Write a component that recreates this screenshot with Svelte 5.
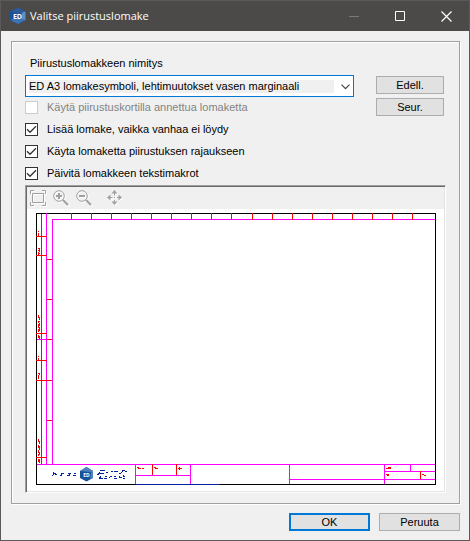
<script>
  const lomakkeet = ['ED A3 lomakesymboli, lehtimuutokset vasen marginaali'];

  let valittu = $state(lomakkeet[0]);
  let valinnat = $state([
    { id: 'kortti', teksti: 'Käytä piirustuskortilla annettua lomaketta', paalla: false, estetty: true },
    { id: 'lisaa', teksti: 'Lisää lomake, vaikka vanhaa ei löydy', paalla: true, estetty: false },
    { id: 'rajaus', teksti: 'Käyta lomaketta piirustuksen rajaukseen', paalla: true, estetty: false },
    { id: 'makrot', teksti: 'Päivitä lomakkeen tekstimakrot', paalla: true, estetty: false },
  ]);

  function siirry(askel) {
    const i = lomakkeet.indexOf(valittu) + askel;
    if (i >= 0 && i < lomakkeet.length) valittu = lomakkeet[i];
  }

  // edge marks of the sheet
  const ylamerkit = [35, 55, 75, 95, 115, 135, 155, 175, 195, 216, 236, 256, 276, 296, 316, 336, 356, 376];
  const ylaPolku = ylamerkit.map((x) => `M${x}.5 0V7`).join('');

  // [y, x1, x2]
  const vasenmerkit = [
    [23, 0, 11], [42, 0, 11], [46, 11, 16], [86, 11, 16], [120, 0, 11], [126, 11, 16],
    [147, 0, 11], [167, 0, 16], [207, 11, 16], [244, 0, 11],
  ];
  const vasenPolku = vasenmerkit.map(([y, a, b]) => `M${a} ${y}.5H${b}`).join('');
</script>

<main class="ikkuna">
  <header class="otsikko">
    <svg class="logo" width="18" height="18" viewBox="0 0 18 18" aria-hidden="true">
      <path d="M9 0.5L16.5 4.5V13L9 17L1 13V4.5Z" fill="#17509b" />
      <path d="M9 0.5L16.5 4.5L9 7L1 4.5Z" fill="#2c5a94" />
      <path d="M16.5 4.5V13L12 14L13 5.5Z" fill="#5c8fc6" />
      <path d="M1 13L9 10L16.5 13L9 17Z" fill="#3c74b5" />
      <text x="8.5" y="11.5" text-anchor="middle">ED</text>
    </svg>
    <h1>Valitse piirustuslomake</h1>
    <div class="ikkunanapit">
      <button aria-label="Pienennä" disabled>
        <svg width="11" height="11" viewBox="0 0 11 11"><path d="M0 5.5H10" stroke="#7b7a78" /></svg>
      </button>
      <button aria-label="Suurenna">
        <svg width="11" height="11" viewBox="0 0 11 11"><path d="M0.5 0.5H9.5V9.5H0.5Z" fill="none" stroke="#fff" /></svg>
      </button>
      <button aria-label="Sulje">
        <svg width="11" height="11" viewBox="0 0 11 11"><path d="M0.5 0.5L10.5 10.5M10.5 0.5L0.5 10.5" stroke="#fff" stroke-width="1.2" /></svg>
      </button>
    </div>
  </header>

  <section class="kehys">
    <label class="nimitys" for="lomake">Piirustuslomakkeen nimitys</label>

    <div class="asetukset">
      <div class="vasen">
        <div class="valikko">
          <select id="lomake" bind:value={valittu}>
            {#each lomakkeet as l}
              <option value={l}>{l}</option>
            {/each}
          </select>
          <svg class="nuoli" width="9" height="6" viewBox="0 0 9 6" aria-hidden="true">
            <path d="M0.5 0.7L4.5 4.7L8.5 0.7" fill="none" stroke="#444" stroke-width="1.2" />
          </svg>
        </div>

        <div class="valinnat">
          {#each valinnat as v (v.id)}
            <label class="valinta" class:estetty={v.estetty}>
              <input type="checkbox" bind:checked={v.paalla} disabled={v.estetty} />
              <span class="ruutu">
                {#if v.paalla}
                  <svg width="11" height="11" viewBox="0 0 11 11" aria-hidden="true">
                    <path d="M1 5.3L4 8.3L10 2.3" fill="none" stroke="#333" stroke-width="1.3" />
                  </svg>
                {/if}
              </span>
              {v.teksti}
            </label>
          {/each}
        </div>
      </div>

      <div class="selaus">
        <button class="nappi" onclick={() => siirry(-1)}>Edell.</button>
        <button class="nappi" onclick={() => siirry(1)}>Seur.</button>
      </div>
    </div>

    <div class="esikatselu">
      <div class="tyokalut">
        <button aria-label="Sovita">
          <svg width="17" height="17" viewBox="0 0 17 17">
            <path d="M2.5 3.5H13.5V12.5H2.5ZM0.5 4V0.5H4M12 0.5H15.5V4M0.5 12V15.5H4M12 15.5H15.5V12" />
          </svg>
        </button>
        <button aria-label="Lähennä">
          <svg width="17" height="17" viewBox="0 0 17 17">
            <circle cx="6" cy="6" r="5.3" />
            <path d="M3 6H9M6 3V9" stroke-width="2" />
            <path d="M10 10L15 15" stroke-width="2" />
          </svg>
        </button>
        <button aria-label="Loitonna">
          <svg width="17" height="17" viewBox="0 0 17 17">
            <circle cx="6" cy="6" r="5.3" />
            <path d="M3 6H9" stroke-width="2" />
            <path d="M10 10L15 15" stroke-width="2" />
          </svg>
        </button>
        <button class="siirto" aria-label="Siirrä">
          <svg width="17" height="17" viewBox="0 0 17 17">
            <path d="M7.5 2V5.5M7.5 10V13M2 7.5H5.5M10 7.5H13M7 7.5H8" />
            <path class="karki" d="M7.5 0L10.5 3.5H4.5ZM7.5 15L10.5 11.5H4.5ZM0 7.5L3.5 4.5V10.5ZM15 7.5L11.5 4.5V10.5Z" />
          </svg>
        </button>
      </div>

      <svg class="arkki" viewBox="0 0 400 272" role="img" aria-label="Lomakkeen esikatselu">
        <g class="viivat">
          <path stroke="#000" d="M0.5 0.5H399.5V271.5H0.5Z" />
          <path stroke="#0020a0" d="M100 271.5H184" />
          <path stroke="#f00" d="M5.5 1V251" />
          <path stroke="#f0f" d="M10.5 0V251M16.5 6V251M16 6.5H399M1 126.5H11M1 251.5H399" />
          <path stroke="#f0f" d="M99.5 251V271M154.5 251V271M99 262.5H154M253.5 251V271M348.5 251V271M253 266.5H399M348 258.5H399M374.5 251V258" />
          <path stroke="#f00" d={ylaPolku} />
          <path stroke="#f00" d={vasenPolku} />
          <path stroke="#f00" d="M116.5 251V262M140.5 251V262M384.5 258V266" />
          <!-- column captions, too small to read at this scale -->
          <path stroke="#f00" d="M2.5 18V19M2.5 20V23M2 35.5H4M3.5 35V39M2.5 37V38M2 40.5H4M2.5 39V42" />
          <path stroke="#f00" d="M2.5 102V105M3.5 104V107M2.5 108V110M3.5 108V109M3.5 110V113M2.5 111V115M3.5 114V117M2.5 116V119M2 117.5H4M2.5 122V125M3.5 123V126M2.5 143V144M2.5 145V147" />
          <path stroke="#f00" d="M2 160.5H4M3.5 160V162M2.5 162V166M2.5 226V229M3.5 228V231M2.5 232V235M3.5 233V237M2.5 237V240M3.5 239V242M2.5 241V243M2.5 246V249M3.5 246V250" />
          <path stroke="#f00" d="M101 254.5H103M102 255.5H105M106 255.5H108M118 254.5H120M119 255.5H122M142 255.5H146M143.5 254V257M350 255.5H355M352 254.5H355M350 261.5H353M351 262.5H353M386 261.5H388M388 262.5H390" />
          <path stroke="#0020a0" d="M17 259.5H18M17 260.5H20M17 261.5H18M19 261.5H21M16 262.5H17M24 262.5H26M25 261.5H26M25 260.5H28M31 262.5H34M32 260.5H35M33 261.5H34M37 262.5H40M38 260.5H40" />
          <path stroke="#0020a0" d="M64 257.5H69M62 260.5H68M61 261.5H63M63 259.5H64M70 259.5H72M75 258.5H77M78 258.5H82M83 260.5H85M86 257.5H89M86 258.5H87M85 259.5H86M89 258.5H91M64 263.5H65M63 264.5H65M63 265.5H67M69 263.5H71M68 265.5H71M73 264.5H74M74 263.5H76M78 263.5H80M78 265.5H81M83 263.5H84M83 264.5H86M87 262.5H88M87 263.5H89M87 265.5H89" />
        </g>
        <path d="M50.5 254L57 258V265L50.5 268.500L44 265V258Z" fill="#17509b" />
        <path d="M50.5 254L57 258V265L54 266L55 259L44 258Z" fill="#4d82bb" />
        <text class="merkki" x="50.5" y="263.5" text-anchor="middle">ED</text>
      </svg>
    </div>
  </section>

  <footer class="toiminnot">
    <button class="nappi oletus">OK</button>
    <button class="nappi">Peruuta</button>
  </footer>
</main>

<style>
  :global(body) {
    background: #f0f0f0;
  }

  .ikkuna {
    box-sizing: border-box;
    display: flex;
    flex-direction: column;
    min-height: 100vh;
    border: 1px solid #5a5a5a;
    background: #f0f0f0;
    color: #000;
    font-family: "Liberation Sans", Arial, sans-serif;
    font-size: 11px;
    line-height: 14px;
  }

  .otsikko {
    display: flex;
    align-items: center;
    height: 30px;
    padding-left: 8px;
    background: #4c4a48;
    color: #fff;
  }
  .otsikko h1 {
    flex: 1;
    margin: 0 0 0 3px;
    font: 400 11px/16px "Open Sans", "Noto Sans", sans-serif;
  }
  .logo text {
    fill: #fff;
    font: 700 7px "Open Sans", sans-serif;
  }

  .ikkunanapit {
    display: flex;
  }
  .ikkunanapit button {
    display: flex;
    align-items: center;
    justify-content: center;
    width: 46px;
    height: 30px;
    padding: 0;
    border: none;
    background: transparent;
  }
  .ikkunanapit button:hover:enabled { background: #6a6866; }

  .kehys {
    margin: 10px 9px 9px 10px;
    padding: 14px 13px 10px;
    border: 1px solid #a0a0a0;
    box-shadow: 1px 1px 0 #fff, inset 1px 1px 0 #fff;
  }

  .nimitys {
    display: block;
    margin: 0 0 5px 5px;
  }

  .asetukset {
    display: flex;
    gap: 22px;
  }
  .vasen {
    flex: 1;
    min-width: 0;
  }

  .valikko {
    position: relative;
  }
  select {
    display: block;
    width: 100%;
    height: 22px;
    padding: 0 20px 0 3px;
    border: 1px solid #0078d7;
    border-radius: 0;
    appearance: none;
    background: linear-gradient(#f0f0f0, #f0f0f0) 3px 4px / calc(100% - 22px) 13px no-repeat #fff;
    color: #000;
    font: inherit;
    outline: none;
  }
  .nuoli {
    position: absolute;
    top: 9px;
    right: 4px;
    pointer-events: none;
  }

  .valinnat {
    display: flex;
    flex-direction: column;
    gap: 8px;
    margin-top: 3px;
  }
  .valinta {
    display: flex;
    align-items: center;
  }
  .valinta input {
    position: absolute;
    opacity: 0;
    margin: 0;
  }
  .ruutu {
    box-sizing: border-box;
    width: 13px;
    height: 13px;
    margin-right: 9px;
    border: 1px solid #333;
    background: #fff;
  }
  .ruutu svg {
    display: block;
  }
  .estetty { color: #838383; }
  .estetty .ruutu { border-color: #ccc; }

  .selaus {
    display: flex;
    flex-direction: column;
    gap: 4px;
    width: 68px;
    margin: 1px 2px 0 0;
  }

  .nappi {
    height: 18px;
    padding: 0;
    border: 1px solid #adadad;
    background: #e1e1e1;
    color: #000;
    font: inherit;
  }
  .nappi:hover { background: #e5f1fb; }
  .nappi.oletus { border: 2px solid #0078d7; }

  .esikatselu {
    margin-top: 5px;
    border: 1px solid;
    border-color: #a0a0a0 #fff #fff #a0a0a0;
    box-shadow: inset 1px 1px 0 #696969, inset -1px -1px 0 #e3e3e3;
    padding: 1px;
  }
  .tyokalut {
    display: flex;
    gap: 6px;
    padding: 3px;
    background: #f0f0f0;
  }
  .tyokalut button {
    width: 17px;
    height: 16px;
    padding: 0;
    border: none;
    background: transparent;
  }
  .tyokalut svg {
    display: block;
    fill: none;
    stroke: #a0a0a0;
    filter: drop-shadow(1px 1px 0 #fff);
  }
  .tyokalut .karki {
    fill: #a0a0a0;
    stroke: none;
  }
  .tyokalut .siirto { margin-left: 8px; }

  .arkki {
    display: block;
    box-sizing: border-box;
    width: 100%;
    padding: 4px 8px 6px 9px;
    background: #fff;
  }
  .viivat {
    fill: none;
    shape-rendering: crispEdges;
  }
  .merkki {
    fill: #fff;
    font: 700 5px "Open Sans", sans-serif;
  }

  .toiminnot {
    display: flex;
    justify-content: flex-end;
    gap: 9px;
    padding: 0 9px 9px;
  }
  .toiminnot .nappi { width: 81px; }
</style>
